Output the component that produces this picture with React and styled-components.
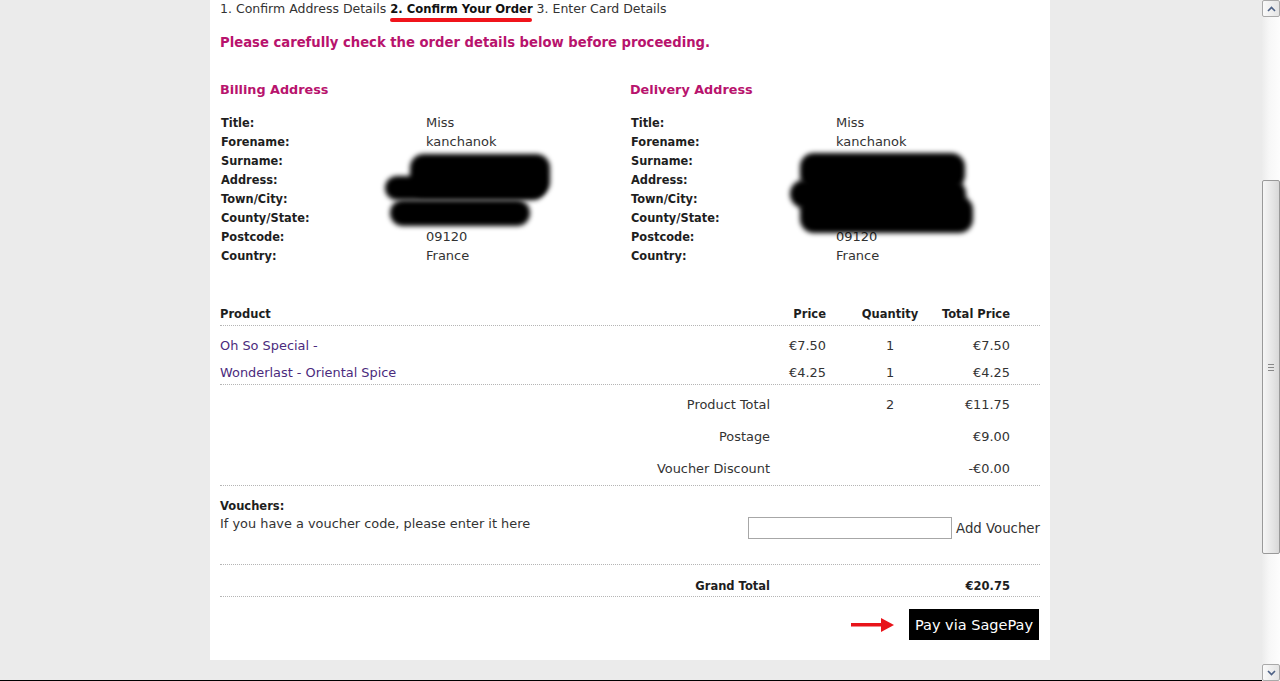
import React from "react";
import styled, { createGlobalStyle } from "styled-components";

const GlobalStyle = createGlobalStyle`
  html, body {
    margin: 0;
    padding: 0;
    background: #ebebeb;
    overflow: hidden;
  }
  body {
    font-family: "DejaVu Sans", Verdana, sans-serif;
    color: #333;
  }
`;

const PINK = "#b8136d";
const DOTTED = "1px dotted #b5b5b5";

const billing = [
  ["Title:", "Miss"],
  ["Forename:", "kanchanok"],
  ["Surname:", ""],
  ["Address:", ""],
  ["Town/City:", ""],
  ["County/State:", ""],
  ["Postcode:", "09120"],
  ["Country:", "France"],
];

const items = [
  { name: "Oh So Special -", price: "€7.50", qty: "1", total: "€7.50" },
  { name: "Wonderlast - Oriental Spice", price: "€4.25", qty: "1", total: "€4.25" },
];

const summary = [
  { label: "Product Total", qty: "2", total: "€11.75" },
  { label: "Postage", qty: "", total: "€9.00" },
  { label: "Voucher Discount", qty: "", total: "-€0.00" },
];

// blurred marker strokes hiding the private parts of each address
const billingMarks = [
  { left: 190, top: 41, width: 140, height: 42 },
  { left: 165, top: 63, width: 160, height: 24 },
  { left: 170, top: 87, width: 140, height: 26 },
];
const deliveryMarks = [
  { left: 170, top: 40, width: 165, height: 36 },
  { left: 160, top: 67, width: 176, height: 28 },
  { left: 170, top: 83, width: 173, height: 37 },
];

const App = () => {
  return (
    <>
      <GlobalStyle />
      <Viewport>
        <Main>
          <Panel>
            <Steps>
              1. Confirm Address Details <Current>2. Confirm Your Order</Current> 3.
              Enter Card Details
            </Steps>
            <Notice>Please carefully check the order details below before proceeding.</Notice>

            <Addresses>
              <AddressBlock title="Billing Address" marks={billingMarks} />
              <AddressBlock title="Delivery Address" marks={deliveryMarks} />
            </Addresses>

            <Order>
              <HeadRow>
                <Cell>Product</Cell>
                <Cell $align="right">Price</Cell>
                <Cell $align="center">Quantity</Cell>
                <Cell $align="right">Total Price</Cell>
                <Cell />
              </HeadRow>

              <Group $top={12} $bottom={3} $gap={11}>
                {items.map((it) => (
                  <Row key={it.name}>
                    <ProductLink href="#">{it.name}</ProductLink>
                    <Cell $align="right">{it.price}</Cell>
                    <Cell $align="center">{it.qty}</Cell>
                    <Cell $align="right">{it.total}</Cell>
                    <Cell />
                  </Row>
                ))}
              </Group>

              <Group $top={12} $bottom={8} $gap={16}>
                {summary.map((s) => (
                  <Row key={s.label}>
                    <Cell $align="right">{s.label}</Cell>
                    <Cell />
                    <Cell $align="center">{s.qty}</Cell>
                    <Cell $align="right">{s.total}</Cell>
                    <Cell />
                  </Row>
                ))}
              </Group>

              <VoucherSection>
                <VoucherText>
                  <strong>Vouchers:</strong>
                  <span>If you have a voucher code, please enter it here</span>
                </VoucherText>
                <VoucherForm>
                  <VoucherInput type="text" />
                  <AddLink>Add Voucher</AddLink>
                </VoucherForm>
              </VoucherSection>

              <Group $top={13} $bottom={2} $gap={0}>
                <Row $bold>
                  <Cell $align="right">Grand Total</Cell>
                  <Cell />
                  <Cell />
                  <Cell $align="right">€20.75</Cell>
                  <Cell />
                </Row>
              </Group>

              <PayRow>
                <Arrow width="44" height="14" viewBox="0 0 44 14">
                  <rect x="0" y="5" width="32" height="3.5" fill="#e8141a" />
                  <path d="M30 0 L43 7 L30 14 Z" fill="#e8141a" />
                </Arrow>
                <PayButton>Pay via SagePay</PayButton>
              </PayRow>
            </Order>
          </Panel>
        </Main>
        <Scrollbar>
          <ScrollButton>
            <svg width="9" height="6" viewBox="0 0 9 6">
              <path d="M1 5 L4.5 1.5 L8 5" stroke="#4d6185" strokeWidth="1.6" fill="none" />
            </svg>
          </ScrollButton>
          <Track>
            <Thumb>
              <Grip />
            </Thumb>
          </Track>
          <ScrollButton>
            <svg width="9" height="6" viewBox="0 0 9 6">
              <path d="M1 1 L4.5 4.5 L8 1" stroke="#4d6185" strokeWidth="1.6" fill="none" />
            </svg>
          </ScrollButton>
        </Scrollbar>
      </Viewport>
    </>
  );
};

const AddressBlock = ({ title, marks }) => (
  <Block>
    <BlockTitle>{title}</BlockTitle>
    <AddressList>
      {billing.map(([label, value]) => (
        <React.Fragment key={label}>
          <Label>{label}</Label>
          <Value>{value}</Value>
        </React.Fragment>
      ))}
      {marks.map((m, i) => (
        <Redaction
          key={i}
          style={{ left: m.left, top: m.top, width: m.width, height: m.height }}
        />
      ))}
    </AddressList>
  </Block>
);

// page frame

const Viewport = styled.div`
  display: flex;
  height: 681px;
  width: 1280px;
`;

const Main = styled.div`
  flex: 1;
  display: flex;
  justify-content: center;
  align-items: flex-start;
  padding-right: 2px;
  border-bottom: 1px solid #000;
  box-sizing: border-box;
  overflow: hidden;
`;

const Panel = styled.div`
  width: 840px;
  box-sizing: border-box;
  background: #fff;
  padding: 1px 10px 20px;
`;

// header texts

const Steps = styled.div`
  font-size: 12.5px;
  line-height: 16px;
  color: #333;
  white-space: nowrap;
`;

const Current = styled.b`
  position: relative;
  font-size: 11.6px;
  color: #111;
  &::after {
    content: "";
    position: absolute;
    left: 0;
    right: 1px;
    top: 16px;
    height: 4px;
    border-radius: 2px;
    background: #f0141b;
  }
`;

const Notice = styled.h2`
  margin: 17px 0 0;
  font-size: 13.2px;
  line-height: 18px;
  font-weight: bold;
  color: ${PINK};
  white-space: nowrap;
`;

// addresses

const Addresses = styled.div`
  display: grid;
  grid-template-columns: 410px 410px;
  margin-top: 29px;
`;

const Block = styled.div`
  display: flex;
  flex-direction: column;
`;

const BlockTitle = styled.h3`
  margin: 0;
  font-size: 12.8px;
  line-height: 18px;
  color: ${PINK};
`;

const AddressList = styled.div`
  position: relative;
  display: grid;
  grid-template-columns: 205px 1fr;
  grid-auto-rows: 19px;
  margin-top: 14px;
  padding-left: 1px;
`;

const Label = styled.div`
  font-size: 11.4px;
  font-weight: bold;
  line-height: 20px;
  color: #1e1e1e;
`;

const Value = styled.div`
  font-size: 13px;
  line-height: 19px;
  color: #333;
`;

const Redaction = styled.span`
  position: absolute;
  background: #000;
  border-radius: 14px;
  filter: blur(2.5px);
`;

// order table

const Order = styled.div`
  margin-top: 38px;
`;

const columns = "554px 76px 80px 84px 26px";

const HeadRow = styled.div`
  display: grid;
  grid-template-columns: ${columns};
  height: 22px;
  line-height: 22px;
  font-size: 11.5px;
  font-weight: bold;
  color: #1e1e1e;
  border-bottom: ${DOTTED};
  & > div:nth-child(2) {
    padding-right: 24px;
  }
  & > div:nth-child(4) {
    padding-right: 4px;
  }
`;

const Group = styled.div`
  display: flex;
  flex-direction: column;
  gap: ${(p) => p.$gap}px;
  padding: ${(p) => p.$top}px 0 ${(p) => p.$bottom}px;
  border-bottom: ${DOTTED};
`;

const Row = styled.div`
  display: grid;
  grid-template-columns: ${columns};
  line-height: 16px;
  font-size: ${(p) => (p.$bold ? "11.5px" : "12.9px")};
  font-weight: ${(p) => (p.$bold ? "bold" : "normal")};
  color: ${(p) => (p.$bold ? "#1e1e1e" : "#333")};
  & > *:nth-child(1) {
    padding-right: 4px;
  }
  & > *:nth-child(2) {
    padding-right: 24px;
  }
  & > *:nth-child(4) {
    padding-right: 4px;
  }
`;

const Cell = styled.div`
  text-align: ${(p) => p.$align || "left"};
  white-space: nowrap;
`;

const ProductLink = styled.a`
  color: #4b2b7d;
  text-decoration: none;
  white-space: nowrap;
`;

const VoucherSection = styled.div`
  display: flex;
  justify-content: space-between;
  align-items: flex-start;
  height: 79px;
  box-sizing: border-box;
  padding-top: 12px;
  border-bottom: ${DOTTED};
`;

const VoucherText = styled.div`
  display: flex;
  flex-direction: column;
  font-size: 12.9px;
  line-height: 17px;
  color: #333;
  strong {
    font-size: 11.5px;
    color: #1e1e1e;
  }
`;

const VoucherForm = styled.div`
  display: flex;
  align-items: center;
  gap: 4px;
  margin-top: 19px;
`;

const VoucherInput = styled.input`
  width: 204px;
  height: 22px;
  box-sizing: border-box;
  border: 1px solid #a7a7a7;
  padding: 0 3px;
  margin: 0;
`;

const AddLink = styled.span`
  font-size: 13.3px;
  color: #333;
  white-space: nowrap;
`;

const PayRow = styled.div`
  display: flex;
  justify-content: flex-end;
  align-items: center;
  gap: 14px;
  padding-top: 12px;
  padding-right: 1px;
`;

const Arrow = styled.svg`
  display: block;
`;

const PayButton = styled.button`
  height: 31px;
  padding: 0 6px;
  border: none;
  background: #000;
  color: #fff;
  font-family: "DejaVu Sans", Verdana, sans-serif;
  font-size: 14.5px;
  font-weight: normal;
  cursor: pointer;
`;

// scrollbar

const Scrollbar = styled.div`
  width: 18px;
  height: 681px;
  display: flex;
  flex-direction: column;
  background: linear-gradient(to right, #ececec, #f7f7f7 40%, #fdfdfd);
`;

const ScrollButton = styled.div`
  height: 17px;
  display: flex;
  align-items: center;
  justify-content: center;
  box-sizing: border-box;
  border: 1px solid #a9a9a9;
  border-radius: 2px;
  background: linear-gradient(to right, #fafafa, #e4e4e4);
`;

const Track = styled.div`
  flex: 1;
  padding-top: 163px;
  padding-bottom: 110px;
  display: flex;
`;

const Thumb = styled.div`
  flex: 1;
  box-sizing: border-box;
  border: 1px solid #999;
  border-radius: 2px;
  background: linear-gradient(to right, #f6f6f6, #e2e2e2 70%, #d8d8d8);
  display: flex;
  align-items: center;
  justify-content: center;
`;

const Grip = styled.span`
  width: 6px;
  height: 5px;
  border-top: 1px solid #888;
  border-bottom: 1px solid #888;
  position: relative;
  &::after {
    content: "";
    position: absolute;
    left: 0;
    right: 0;
    top: 2px;
    height: 1px;
    background: #888;
  }
`;

export default App;
